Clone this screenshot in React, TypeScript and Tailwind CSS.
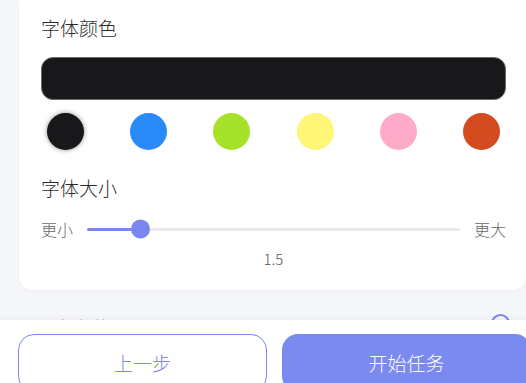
const colors = ["#18181a", "#2a8af8", "#a6e22a", "#fff576", "#ffaac8", "#d54b20"];

export default function App() {
  return (
    <div
      className="relative h-[383px] w-[526px] overflow-hidden bg-[#f6f7fb] font-light"
      style={{ fontFamily: '"Noto Sans CJK SC", "Noto Sans", sans-serif' }}
    >
      {/* Settings card */}
      <div className="ml-[19px] w-[507px] rounded-b-[14px] bg-white pb-[20px] pl-[22px] pr-[20px] pt-[14px] shadow-[0_2px_6px_rgba(0,0,0,0.03)]">
        <div className="text-[19px] leading-[28px] text-[#2b2b2b]">字体颜色</div>

        <div className="mt-[15px] h-[43px] rounded-[12px] border border-[#6b6b6b] bg-[#18181a]" />

        <div className="mt-[13px] flex justify-between px-[5.5px]">
          {colors.map((c, i) => (
            <div
              key={c}
              className={
                i === 0
                  ? "h-[37px] w-[37px] rounded-full shadow-[0_0_5px_rgba(0,0,0,0.45)]"
                  : "h-[37px] w-[37px] rounded-full"
              }
              style={{ backgroundColor: c }}
            />
          ))}
        </div>

        <div className="mt-[24px] text-[19px] leading-[28px] text-[#2b2b2b]">字体大小</div>

        {/* Slider */}
        <div className="mt-[16px] flex items-center gap-[14px]">
          <span className="text-[16px] leading-[22px] text-[#666]">更小</span>
          <div className="relative h-[3px] flex-1 rounded-full bg-[#e9e9eb]">
            <div className="h-full w-[53px] rounded-full bg-[#7b86ee]" />
            <div className="absolute left-[44px] top-1/2 h-[19px] w-[19px] -translate-y-1/2 rounded-full bg-[#7b86ee]" />
          </div>
          <span className="text-[16px] leading-[22px] text-[#666]">更大</span>
        </div>

        <div className="mt-[8px] text-center text-[15px] leading-[22px] text-[#555]">1.5</div>
      </div>

      {/* Next section (hidden under footer) */}
      <div className="mt-[24px] flex items-start justify-between pl-[34px] pr-[16px]">
        <span className="text-[19px] leading-[28px] text-[#444]">同步字幕</span>
        <div className="h-[19px] w-[19px] rounded-full border-2 border-[#7b86ee]" />
      </div>

      {/* Footer */}
      <div className="absolute left-0 top-[320px] flex h-[70px] w-[560px] gap-[15px] bg-white pl-[18px] pt-[14px] shadow-[0_-2px_6px_rgba(0,0,0,0.05)]">
        <button className="flex h-[58px] w-[249px] shrink-0 items-center justify-center rounded-[16px] border-[1.5px] border-[#7b86ee] bg-white text-[19px] font-light text-[#7b86ee]">
          上一步
        </button>
        <button className="flex h-[58px] w-[249px] shrink-0 items-center justify-center rounded-[16px] bg-[#7b8aef] text-[19px] font-light text-white">
          开始任务
        </button>
      </div>
    </div>
  );
}
